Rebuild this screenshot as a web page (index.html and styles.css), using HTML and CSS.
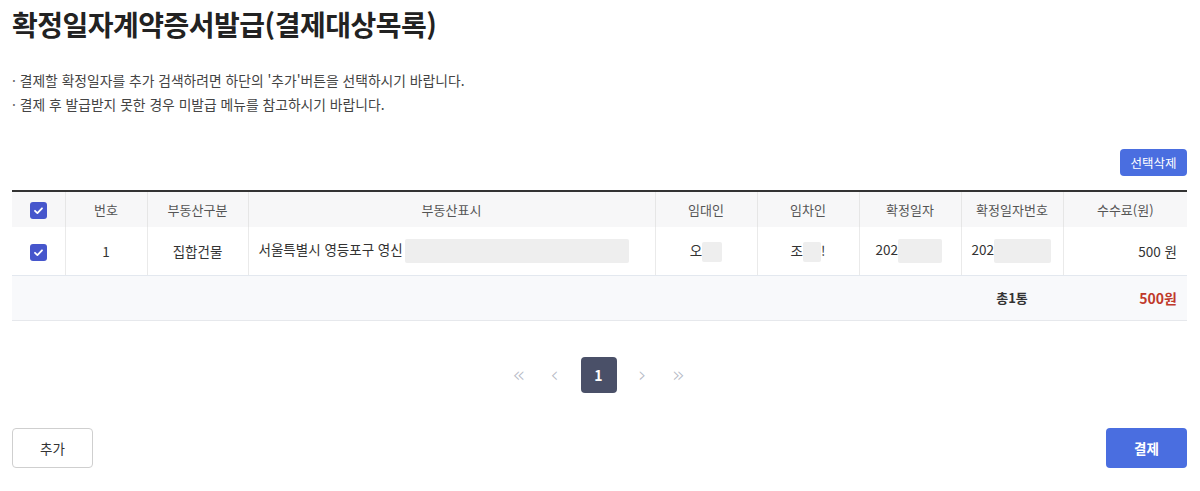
FILE: index.html
```html
<!DOCTYPE html>
<html lang="ko">
<head>
<meta charset="utf-8">
<link rel="stylesheet" href="styles.css">
</head>
<body>
<div class="page">
  <h1 class="title">확정일자계약증서발급(결제대상목록)</h1>
  <ul class="notes">
    <li>결제할 확정일자를 추가 검색하려면 하단의 '추가'버튼을 선택하시기 바랍니다.</li>
    <li>결제 후 발급받지 못한 경우 미발급 메뉴를 참고하시기 바랍니다.</li>
  </ul>
  <div class="toolbar"><button class="btn-del">선택삭제</button></div>
  <table class="grid">
    <colgroup>
      <col style="width:53px"><col style="width:82px"><col style="width:101px"><col style="width:407px">
      <col style="width:102px"><col style="width:102px"><col style="width:102px"><col style="width:102px"><col style="width:124px">
    </colgroup>
    <thead>
      <tr>
        <th><span class="chk"><svg viewBox="0 0 17 17" width="17" height="17"><path d="M5 8.8l2.4 2.3 4.6-4.8" fill="none" stroke="#fff" stroke-width="1.8" stroke-linecap="round" stroke-linejoin="round"/></svg></span></th>
        <th>번호</th><th>부동산구분</th><th>부동산표시</th><th>임대인</th><th>임차인</th><th>확정일자</th><th>확정일자번호</th><th>수수료(원)</th>
      </tr>
    </thead>
    <tbody>
      <tr class="row">
        <td class="c"><span class="chk"><svg viewBox="0 0 17 17" width="17" height="17"><path d="M5 8.8l2.4 2.3 4.6-4.8" fill="none" stroke="#fff" stroke-width="1.8" stroke-linecap="round" stroke-linejoin="round"/></svg></span></td>
        <td class="c">1</td>
        <td class="c">집합건물</td>
        <td class="l addr">서울특별시 영등포구 영신<span class="mask m-addr"></span></td>
        <td class="c">오<span class="mask m-name"></span></td>
        <td class="c">조<span class="mask m-name2"></span>!</td>
        <td class="l pad">202<span class="mask m-date"></span></td>
        <td class="l">202<span class="mask m-no"></span></td>
        <td class="r">500 원</td>
      </tr>
      <tr class="sum">
        <td colspan="7"></td>
        <td class="c strong">총1통</td>
        <td class="r total">500원</td>
      </tr>
    </tbody>
  </table>
  <nav class="pager">
    <span class="pg">«</span>
    <span class="pg">‹</span>
    <span class="pg cur">1</span>
    <span class="pg">›</span>
    <span class="pg">»</span>
  </nav>
  <div class="actions">
    <button class="btn-add">추가</button>
    <button class="btn-pay">결제</button>
  </div>
</div>
</body>
</html>
```

FILE: styles.css
```css
* { box-sizing: border-box; }
html, body { margin: 0; padding: 0; background: #fff; }
body {
  font-family: "Noto Sans CJK KR", "Noto Sans", sans-serif;
  color: #333;
  width: 1200px;
  height: 491px;
  overflow: hidden;
}
.page { padding: 0 13px 0 12px; }
.title {
  margin: 0;
  padding-top: 4px;
  font-size: 28px;
  font-weight: 700;
  line-height: 40px;
  color: #222;
  letter-spacing: -0.5px;
}
.notes {
  list-style: none;
  margin: 24px 0 0;
  padding: 0;
  font-size: 13.8px;
  line-height: 24px;
  color: #444;
}
.notes li::before { content: "· "; color: #666; }
.toolbar {
  display: flex;
  justify-content: flex-end;
  margin-top: 33px;
  height: 27px;
}
.btn-del {
  width: 67px;
  height: 27px;
  border: 0;
  border-radius: 4px;
  background: #4a6ee0;
  color: #fff;
  font-family: inherit;
  font-size: 12.5px;
  padding: 0;
}
.grid {
  margin-top: 14px;
  width: 1175px;
  border-collapse: collapse;
  table-layout: fixed;
  border-top: 2px solid #333;
  font-size: 13px;
}
.grid th {
  height: 36px;
  background: #f7f7f8;
  font-weight: 400;
  color: #555;
  border-left: 1px solid #e6e6e6;
  padding: 0;
  text-align: center;
}
.grid th:first-child, .grid td:first-child { border-left: 0; }
.grid td {
  padding: 0;
  border-left: 1px solid #eaeaea;
  font-size: 13.5px;
}
.row td {
  height: 48px;
  color: #333;
  border-bottom: 1px solid #e3e8ef;
}
.c { text-align: center; }
.l { text-align: left; padding-left: 10px !important; }
.l.pad { padding-left: 16px !important; }
.r { text-align: right; padding-right: 10px !important; }
.chk {
  display: inline-block;
  width: 17px;
  height: 17px;
  border-radius: 3px;
  background: #4656cc;
  vertical-align: middle;
}
.chk svg { display: block; }
.mask {
  display: inline-block;
  vertical-align: middle;
  background: #eeeeee;
  height: 24px;
  border-radius: 2px;
}
.m-addr { width: 224px; margin-left: 2px; }
.m-name { width: 20px; height: 20px; }
.m-name2 { width: 18px; height: 20px; }
.m-date { width: 44px; }
.m-no { width: 57px; }
.sum td {
  height: 45px;
  background: #f8f9fb;
  border-left: 0;
  border-bottom: 1px solid #e6e8ec;
}
.strong { font-weight: 700; color: #333; font-size: 13px !important; }
.total { font-weight: 700; color: #c0392b; font-size: 14px !important; }
.pager {
  display: flex;
  justify-content: center;
  align-items: center;
  margin-top: 36px;
  padding-right: 2px;
}
.pg {
  width: 36px;
  height: 36px;
  display: flex;
  align-items: center;
  justify-content: center;
  color: #b4b8c4;
  font-size: 21px;
  font-family: "DejaVu Sans", sans-serif;
  font-weight: 300;
}
.pg.cur {
  background: #4a5068;
  color: #fff;
  border-radius: 4px;
  font-size: 14px;
  font-weight: 700;
  font-family: "Noto Sans CJK KR", sans-serif;
  margin: 0 8px;
}
.actions {
  display: flex;
  justify-content: space-between;
  margin-top: 35px;
}
.btn-add, .btn-pay {
  width: 81px;
  height: 40px;
  border-radius: 4px;
  font-family: inherit;
  font-size: 13.5px;
  padding: 0;
}
.btn-add { background: #fff; border: 1px solid #cfcfcf; color: #333; }
.btn-pay { background: #4a6ee0; border: 0; color: #fff; font-weight: 700; }
```
